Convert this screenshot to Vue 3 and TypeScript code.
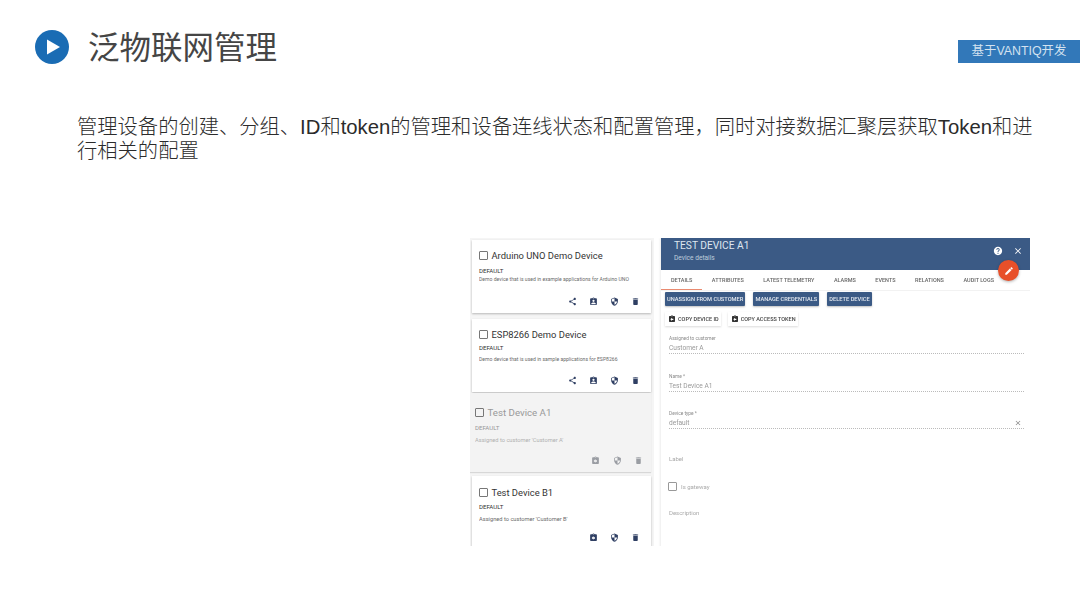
<script setup lang="ts">
const icons: Record<string, string> = {
  share: 'M18 16.08c-.76 0-1.44.3-1.96.77L8.91 12.7c.05-.23.09-.46.09-.7s-.04-.47-.09-.7l7.05-4.11c.54.5 1.25.81 2.04.81 1.66 0 3-1.34 3-3s-1.34-3-3-3-3 1.34-3 3c0 .24.04.47.09.7L8.04 9.81C7.5 9.31 6.79 9 6 9c-1.66 0-3 1.34-3 3s1.34 3 3 3c.79 0 1.5-.31 2.04-.81l7.12 4.16c-.05.21-.08.43-.08.65 0 1.61 1.31 2.92 2.92 2.92s2.92-1.31 2.92-2.92-1.31-2.92-2.92-2.92z',
  assign: 'M19 3h-4.18C14.4 1.84 13.3 1 12 1c-1.3 0-2.4.84-2.82 2H5c-1.1 0-2 .9-2 2v14c0 1.1.9 2 2 2h14c1.1 0 2-.9 2-2V5c0-1.1-.9-2-2-2zm-7 0c.55 0 1 .45 1 1s-.45 1-1 1-1-.45-1-1 .45-1 1-1zm0 4c1.66 0 3 1.34 3 3s-1.34 3-3 3-3-1.34-3-3 1.34-3 3-3zm6 12H6v-1.4c0-2 4-3.1 6-3.1s6 1.1 6 3.1V19z',
  unassign: 'M19 3h-4.18C14.4 1.84 13.3 1 12 1c-1.3 0-2.4.84-2.82 2H5c-1.1 0-2 .9-2 2v14c0 1.1.9 2 2 2h14c1.1 0 2-.9 2-2V5c0-1.1-.9-2-2-2zm-7 0c.55 0 1 .45 1 1s-.45 1-1 1-1-.45-1-1 .45-1 1-1zm4 12h-4v3l-5-5 5-5v3h4v4z',
  shield: 'M12 1L3 5v6c0 5.55 3.84 10.74 9 12 5.16-1.26 9-6.45 9-12V5l-9-4zm0 10.99h7c-.53 4.12-3.28 7.79-7 8.94V12H5V6.3l7-3.11v8.8z',
  trash: 'M6 19c0 1.1.9 2 2 2h8c1.1 0 2-.9 2-2V7H6v12zM19 4h-3.5l-1-1h-5l-1 1H5v2h14V4z',
  help: 'M12 2C6.48 2 2 6.48 2 12s4.48 10 10 10 10-4.48 10-10S17.52 2 12 2zm1 17h-2v-2h2v2zm2.07-7.75l-.9.92C13.45 12.9 13 13.5 13 15h-2v-.5c0-1.1.45-2.1 1.17-2.83l1.24-1.26c.37-.36.59-.86.59-1.41 0-1.1-.9-2-2-2s-2 .9-2 2H8c0-2.21 1.79-4 4-4s4 1.79 4 4c0 .88-.36 1.68-.93 2.25z',
  close: 'M19 6.41L17.59 5 12 10.59 6.41 5 5 6.41 10.59 12 5 17.59 6.41 19 12 13.41 17.59 19 19 17.59 13.41 12z',
  edit: 'M3 17.25V21h3.75L17.81 9.94l-3.75-3.75L3 17.25zM20.71 7.04c.39-.39.39-1.02 0-1.41l-2.34-2.34c-.39-.39-1.02-.39-1.41 0l-1.83 1.83 3.75 3.75 1.83-1.83z',
}

const devices = [
  { name: 'Arduino UNO Demo Device', desc: 'Demo device that is used in example applications for Arduino UNO', actions: ['share', 'assign', 'shield', 'trash'] },
  { name: 'ESP8266 Demo Device', desc: 'Demo device that is used in sample applications for ESP8266', actions: ['share', 'assign', 'shield', 'trash'] },
  { name: 'Test Device A1', desc: "Assigned to customer 'Customer A'", actions: ['unassign', 'shield', 'trash'], selected: true },
  { name: 'Test Device B1', desc: "Assigned to customer 'Customer B'", actions: ['unassign', 'shield', 'trash'] },
]

const tabs = ['DETAILS', 'ATTRIBUTES', 'LATEST TELEMETRY', 'ALARMS', 'EVENTS', 'RELATIONS', 'AUDIT LOGS']
const actions = ['UNASSIGN FROM CUSTOMER', 'MANAGE CREDENTIALS', 'DELETE DEVICE']
const copies = ['COPY DEVICE ID', 'COPY ACCESS TOKEN']
</script>

<template>
  <div class="slide">
    <header class="top">
      <div class="top__title">
        <svg class="top__play" viewBox="0 0 34 34">
          <circle cx="17" cy="17" r="17" fill="#1a6cb4" />
          <path d="M12 9.5L25 17 12 24.5z" fill="#fff" />
        </svg>
        <h1>泛物联网管理</h1>
      </div>
      <div class="top__badge">基于VANTIQ开发</div>
    </header>

    <p class="intro">管理设备的创建、分组、ID和token的管理和设备连线状态和配置管理，同时对接数据汇聚层获取Token和进行相关的配置</p>

    <section class="shot">
      <div class="list">
        <article
          v-for="d in devices"
          :key="d.name"
          class="card"
          :class="{ 'card--selected': d.selected }"
        >
          <div class="card__head">
            <span class="check"></span>
            <span class="card__name">{{ d.name }}</span>
          </div>
          <div class="card__type">DEFAULT</div>
          <div class="card__desc">{{ d.desc }}</div>
          <div class="card__actions">
            <svg v-for="a in d.actions" :key="a" class="icon" viewBox="0 0 24 24">
              <path :d="icons[a]" />
            </svg>
          </div>
        </article>
      </div>

      <div class="detail">
        <div class="detail__head">
          <div>
            <div class="detail__title">TEST DEVICE A1</div>
            <div class="detail__sub">Device details</div>
          </div>
          <div class="detail__tools">
            <svg viewBox="0 0 24 24"><path :d="icons.help" /></svg>
            <svg viewBox="0 0 24 24"><path :d="icons.close" /></svg>
          </div>
          <div class="fab">
            <svg viewBox="0 0 24 24"><path :d="icons.edit" /></svg>
          </div>
        </div>

        <nav class="tabs">
          <span v-for="(t, i) in tabs" :key="t" class="tab" :class="{ 'tab--active': i === 0 }">{{ t }}</span>
        </nav>

        <div class="btns">
          <span v-for="a in actions" :key="a" class="btn">{{ a }}</span>
        </div>
        <div class="copies">
          <span v-for="c in copies" :key="c" class="copy">
            <svg viewBox="0 0 24 24"><path :d="icons.unassign" /></svg>
            {{ c }}
          </span>
        </div>

        <div class="form">
          <div class="field">
            <label>Assigned to customer</label>
            <div class="field__value">Customer A</div>
          </div>
          <div class="field">
            <label>Name *</label>
            <div class="field__value">Test Device A1</div>
          </div>
          <div class="field">
            <label>Device type *</label>
            <div class="field__value">default
              <svg class="field__clear" viewBox="0 0 24 24"><path :d="icons.close" /></svg>
            </div>
          </div>
          <div class="plain plain--label">Label</div>
          <div class="gateway"><span class="check check--sm"></span>Is gateway</div>
          <div class="plain">Description</div>
        </div>
      </div>
    </section>
  </div>
</template>

<style>
html,
body {
  margin: 0;
  background: #fff;
}
</style>

<style scoped>
.slide {
  width: 1080px;
  height: 608px;
  overflow: hidden;
  background: #fff;
  font-family: "Liberation Sans", "Noto Sans CJK SC", sans-serif;
}

.top {
  display: flex;
  justify-content: space-between;
  align-items: flex-start;
  height: 106px;
  padding-top: 23px;
  box-sizing: border-box;
}
.top__title {
  display: flex;
  align-items: center;
  gap: 19px;
  padding-left: 35px;
  height: 48px;
}
.top__play {
  width: 34px;
  height: 34px;
}
.top h1 {
  margin: 1px 0 0;
  font-size: 31.5px;
  font-weight: 400;
  color: #454545;
  line-height: 50px;
}
.top__badge {
  width: 122px;
  height: 23px;
  margin-top: 17px;
  background: #3278b9;
  color: #d3e2f0;
  font-size: 12.4px;
  line-height: 23px;
  text-align: center;
}

.intro {
  width: 965px;
  margin: 9px 0 0 77px;
  font-size: 20.3px;
  line-height: 24px;
  color: #2b2b2b;
  font-weight: 300;
}

.shot {
  display: grid;
  grid-template-columns: 184px 1fr;
  width: 560px;
  height: 308px;
  margin: 75px 0 0 470px;
  overflow: hidden;
  font-family: Roboto, "Liberation Sans", sans-serif;
  filter: blur(0.35px);
}

.list {
  display: flex;
  flex-direction: column;
  gap: 6px;
  padding: 2px 3px 0 2px;
  background: #f5f5f5;
  box-sizing: border-box;
}
.card {
  flex: none;
  height: 73px;
  padding: 9px 7px 0;
  box-sizing: border-box;
  background: #fff;
  box-shadow: 0 1px 2px rgba(0, 0, 0, 0.25);
  display: flex;
  flex-direction: column;
  color: #333;
}
.card:last-child {
  padding-top: 10px;
}
.card--selected {
  height: 79px;
  margin: -5px 0 -2px -2px;
  padding: 13px 7px 0 5px;
  background: #f3f3f3;
  box-shadow: 0 1px 1px rgba(0, 0, 0, 0.12);
  color: #999;
}
.card__head {
  display: flex;
  align-items: center;
  gap: 3.5px;
  height: 12px;
}
.card__name {
  font-size: 9.4px;
  white-space: nowrap;
}
.card--selected .card__name {
  font-size: 9.7px;
}
.card__type {
  margin-top: 6px;
  font-size: 6.1px;
  line-height: 8px;
}
.card:nth-child(2) .card__type {
  margin-top: 4px;
}
.card:last-child .card__type {
  margin-top: 5px;
}
.card__desc {
  margin-top: 0;
  font-size: 5.1px;
  line-height: 8px;
  white-space: nowrap;
  opacity: 0.75;
}
.card:nth-child(2) .card__desc {
  margin-top: 3px;
}
.card:nth-child(n + 3) .card__desc {
  margin-top: 4px;
  font-size: 5.7px;
}
.card__actions {
  display: flex;
  justify-content: flex-end;
  gap: 12px;
  margin-top: auto;
  padding: 0 4px 7px 0;
}
.card--selected .card__actions {
  padding: 0 1px 7px 0;
  gap: 12.5px;
}
.icon {
  width: 9px;
  height: 9px;
  fill: #2f3f63;
}
.card--selected .icon {
  fill: #9a9da3;
}

.check {
  flex: none;
  width: 7px;
  height: 7px;
  border: 1px solid #777;
  border-radius: 1px;
}
.check--sm {
  border-color: #999;
}

.detail {
  margin-left: 7px;
  background: #fff;
  position: relative;
  box-shadow: -1px 0 2px rgba(0, 0, 0, 0.08);
}
.detail__head {
  display: flex;
  justify-content: space-between;
  height: 32px;
  padding: 2px 7px 0 13px;
  box-sizing: border-box;
  background: #3b5a85;
  color: #dfe6ef;
  position: relative;
}
.detail__title {
  font-size: 10.2px;
  line-height: 12px;
}
.detail__sub {
  margin-top: 2px;
  font-size: 6.6px;
  line-height: 8px;
  opacity: 0.8;
}
.detail__tools {
  display: flex;
  gap: 10px;
  padding-top: 6px;
}
.detail__tools svg {
  width: 10px;
  height: 10px;
  fill: #fff;
}
.fab {
  position: absolute;
  right: 11px;
  top: 22px;
  width: 21px;
  height: 21px;
  border-radius: 50%;
  background: #e8502a;
  display: flex;
  align-items: center;
  justify-content: center;
  box-shadow: 0 1px 3px rgba(0, 0, 0, 0.3);
  z-index: 2;
}
.fab svg {
  width: 10px;
  height: 10px;
  fill: #fff;
}

.tabs {
  display: flex;
  gap: 19.5px;
  height: 20px;
  padding-left: 10px;
  align-items: center;
  border-bottom: 1px solid #f2f2f2;
}
.tab {
  position: relative;
  font-size: 5.5px;
  font-weight: 500;
  color: #666;
  white-space: nowrap;
}
.tab--active::after {
  content: "";
  position: absolute;
  left: -10px;
  right: -10px;
  top: 12px;
  height: 1px;
  background: #e98a70;
}

.btns {
  display: flex;
  gap: 8px;
  padding: 1px 0 0 4px;
}
.btn {
  height: 14px;
  padding: 0 2px;
  background: #3b5a85;
  color: #e4e9f0;
  font-size: 5.7px;
  font-weight: 500;
  line-height: 14px;
  white-space: nowrap;
  border-radius: 1px;
  box-shadow: 0 1px 2px rgba(0, 0, 0, 0.25);
}

.copies {
  display: flex;
  gap: 7px;
  padding: 6px 0 0 4px;
}
.copy {
  display: flex;
  align-items: center;
  gap: 2px;
  height: 14px;
  padding: 0 2px 0 3px;
  background: #fff;
  color: #444;
  font-size: 5.5px;
  font-weight: 500;
  white-space: nowrap;
  box-shadow: 0 1px 2px rgba(0, 0, 0, 0.15);
}
.copy svg {
  width: 8px;
  height: 8px;
  fill: #333;
}

.form {
  padding: 10px 6px 0 8px;
  color: #999;
}
.field {
  height: 38px;
}
.field:nth-child(2) {
  height: 37px;
}
.field label {
  display: block;
  font-size: 4.8px;
  line-height: 6px;
  color: #888;
}
.field__value {
  position: relative;
  margin-top: 1px;
  height: 10px;
  font-size: 6.6px;
  line-height: 11px;
  border-bottom: 1px dotted #bbb;
  color: #999;
}
.field__clear {
  position: absolute;
  right: 2px;
  top: 1px;
  width: 8px;
  height: 8px;
  fill: #888;
}
.plain {
  font-size: 6px;
  line-height: 8px;
  color: #aaa;
}
.plain--label {
  margin-top: 6px;
}
.gateway {
  display: flex;
  align-items: center;
  gap: 4px;
  margin: 19px 0 18px -1px;
  font-size: 6px;
  line-height: 9px;
  color: #aaa;
}
</style>
